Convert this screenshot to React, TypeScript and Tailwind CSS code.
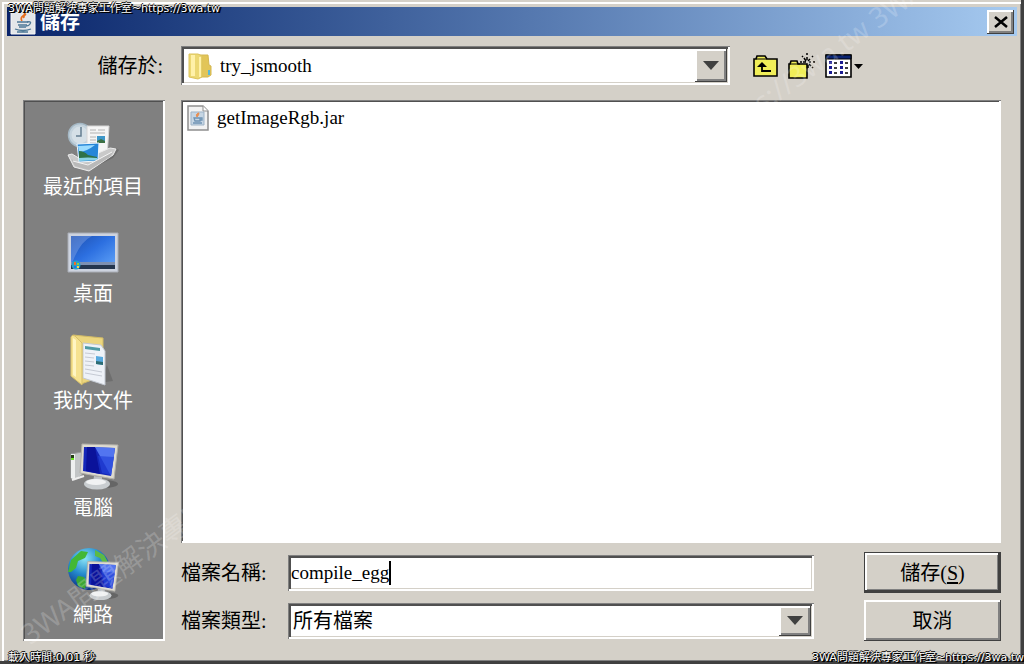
import { useState } from "react";
import type { ReactNode } from "react";

interface Place {
  name: string;
  icon: ReactNode;
}

const sunken =
  "p-[3px] shadow-[inset_1px_1px_0_#808080,inset_-2px_-2px_0_#ffffff,inset_3px_3px_0_#505050,inset_-3px_-3px_0_#d4d0c8]";
const sunkenThin =
  "p-[2px] shadow-[inset_1px_1px_0_#808080,inset_-2px_-2px_0_#ffffff,inset_2px_2px_0_#505050]";
const raised =
  "bg-[#d4d0c8] shadow-[inset_-1px_-1px_0_#404040,inset_2px_2px_0_#ffffff,inset_-3px_-3px_0_#808080]";
const latin = "font-['Liberation_Serif','Noto_Sans_CJK_TC',serif] text-[19px]";
const stamp =
  "pointer-events-none absolute font-['DejaVu_Sans','Noto_Sans_CJK_TC',sans-serif] text-[11px] leading-[13px] text-white whitespace-nowrap [text-shadow:1px_1px_0_#000,-1px_0_0_#000,2px_1px_0_#000,0_-1px_0_#000]";

function RecentIcon() {
  return (
    <svg viewBox="0 0 52 52" className="size-[52px]" aria-hidden="true">
      <path d="M22 50 46 38 52 30 48 28 30 42Z" fill="#555" opacity=".45" />
      <circle cx="13" cy="15" r="11.5" fill="#c3d2dc" stroke="#a4b8c5" strokeWidth="1.5" />
      <circle cx="13" cy="15" r="8.5" fill="#d5e0e7" />
      <path d="M14 7v9H9" fill="none" stroke="#647e91" strokeWidth="1.5" />
      <path d="M20 6h22l-2 32H20Z" fill="#f5f5f5" stroke="#d6d6d6" />
      <path d="M23 10h6m2 0h7M23 13h15M23 17h6m-6 3h6m-6 3h6" stroke="#b3b3b3" />
      <path d="M30 16h8v7h-8Z" fill="#3e96c8" />
      <path d="M30 21l4-2 4 2v2h-8Z" fill="#3c7044" />
      <path d="m1 35 4-1 10 6 28-12 6 1-3 6-24 16-15-4Z" fill="#c9c9c9" stroke="#ececec" />
      <path d="m10 24 22-1-1 18-19 1Z" fill="#2686d8" stroke="#eef6fb" />
      <path d="m11 26 17-1q-9 7-16 7Z" fill="#9bdcff" />
      <path d="M12 31q5 0 9 4l9 2v2l-18 1Z" fill="#2e7148" />
      <path d="M12 38q9-1 18 0v2l-18 1Z" fill="#8ad2e4" />
      <path d="m4 39 8 4 10 1 24-12-3 5-21 13-14-4Z" fill="#b9b9b9" />
      <path d="m6 41 15 4 24-13" fill="none" stroke="#f4f4f4" />
    </svg>
  );
}

function DesktopIcon() {
  return (
    <svg viewBox="0 0 52 52" className="size-[52px]" aria-hidden="true">
      <defs>
        <linearGradient id="desk" x1="0" y1="0" x2="1" y2="1">
          <stop offset="0" stopColor="#1e4fae" />
          <stop offset=".45" stopColor="#2c6fe0" />
          <stop offset="1" stopColor="#63a6fa" />
        </linearGradient>
      </defs>
      <path d="M1 6h50v39H1Z" fill="#cdd3df" stroke="#a9adb5" />
      <path d="M4 9h44v33H4Z" fill="url(#desk)" />
      <path d="M4 9h21Q13 15 6 34l-2 2Z" fill="#9cb8ee" opacity=".35" />
      <path d="M4 35h44v3H4Z" fill="#7d90b2" />
      <path d="M4 38h44v4H4Z" fill="#24364f" />
      <circle cx="9" cy="38" r="4.5" fill="#24a0c8" />
      <path d="M7 35h2v3H7Z" fill="#f06a2a" />
      <path d="M10 36h2v2h-2Z" fill="#8bd13f" />
      <path d="M7 39h2v2H7Z" fill="#2c6fe0" />
      <path d="M10 39h2v2h-2Z" fill="#f8d347" />
    </svg>
  );
}

function DocumentsIcon() {
  return (
    <svg viewBox="0 0 52 52" className="size-[52px]" aria-hidden="true">
      <path d="M32 49l14-2-6-16Z" fill="#444" opacity=".3" />
      <path d="M6 1 36 4v38L14 50Z" fill="#ecd67e" stroke="#d2bb66" />
      <path d="m16 9 18 2 4 6v34l-22-7Z" fill="#eef2f8" stroke="#c3c9d2" />
      <path d="m18 12 15 2v3l-15-2Z" fill="#4f9ba5" />
      <path d="m18 19 10 1m-10 3 9 1m-9 3 9 1m-9 3 9 1m-9 3 17 3m-17 1 17 3" stroke="#c5cad4" />
      <path d="m29 22 7 1v8l-7-1Z" fill="#57a9de" />
      <path d="m29 27 7 1v3l-7-1Z" fill="#2d6c73" />
      <path d="M4 3q1-3 4-1l7 7v42L4 42Z" fill="#f6e290" stroke="#d7bf69" />
      <path d="m6 4 3 2v37l-3-2Z" fill="#fff5c3" />
    </svg>
  );
}

function MonitorShape() {
  return (
    <>
      <ellipse cx="37" cy="43" rx="14" ry="4" fill="#444" opacity=".45" />
      <path d="m27 35 8 1v6h-9Z" fill="#bcc0c4" />
      <ellipse cx="30" cy="43" rx="13" ry="5.5" fill="#c9cdd0" />
      <ellipse cx="29" cy="41" rx="10" ry="3" fill="#f1f2f3" />
      <path d="m15 3 36 1-4 34-34-6Z" fill="#dedbd0" stroke="#b2b0a9" />
      <path d="m17 6 31 1-4 28-28-5Z" fill="#1427b8" />
      <path d="m28 6 20 1-4 28Z" fill="#5275f0" />
      <path d="m20 6 8 0 5 27-14-3Z" fill="#0a129a" />
      <path d="m31 15 16 1-3 18-9-2Z" fill="#2343d8" opacity=".7" />
    </>
  );
}

function ComputerIcon() {
  return (
    <svg viewBox="0 0 52 52" className="size-[52px]" aria-hidden="true">
      <path d="m4 13 11-2v23l-7 5-4-2Z" fill="#c2c5c6" stroke="#979a9b" />
      <path d="M4 13h4v26l-4-2Z" fill="#eef0f0" />
      <path d="M4 14h3v5H4Z" fill="#253f16" />
      <path d="M4 17h3v2H4Z" fill="#6de424" />
      <path d="m5 39 12-4" stroke="#eee" strokeWidth="2" />
      <MonitorShape />
    </svg>
  );
}

function NetworkIcon() {
  return (
    <svg viewBox="0 0 52 52" className="size-[52px]" aria-hidden="true">
      <defs>
        <radialGradient id="globe" cx=".4" cy=".25" r=".75">
          <stop offset="0" stopColor="#8be4f7" />
          <stop offset=".5" stopColor="#258bcd" />
          <stop offset="1" stopColor="#0c2f86" />
        </radialGradient>
      </defs>
      <circle cx="22" cy="21" r="21" fill="url(#globe)" />
      <path d="m4 12 10-9 7 1-3 6-7 3-2 7-5 4-3 0Z" fill="#43b835" />
      <path d="m28 2 9 5 5 9-6-1-3-5-5-2Z" fill="#5cba45" />
      <path d="m11 28 6 1 3 5-2 7-7-3-2-6Z" fill="#3ca634" />
      <g transform="translate(8 11) scale(.85)">
        <MonitorShape />
      </g>
    </svg>
  );
}

function FolderIcon() {
  return (
    <svg viewBox="0 0 24 28" className="h-7 w-6 shrink-0" aria-hidden="true">
      <path d="M9 3h11l1 10 2 1v9l-3 2H9Z" fill="#e2c558" stroke="#d4b751" />
      <path d="M20 18h2v5h-2Z" fill="#59b8d4" />
      <path d="M1 2h9l4 2v21l-4 2-9-2Z" fill="#ecd873" stroke="#dcc35c" />
      <path d="M3 3h4v21H3Zm8 2h2v20h-2Z" fill="#fff1a9" />
    </svg>
  );
}

function JarIcon() {
  return (
    <svg viewBox="0 0 22 26" className="h-[26px] w-[22px] shrink-0" aria-hidden="true">
      <path d="M1 1h15l5 5v19H1Z" fill="#f2f2f2" stroke="#8e8e8e" strokeWidth="1.5" />
      <path d="M16 1v5h5" fill="#fff" stroke="#8e8e8e" />
      <path d="M4 7h13v13H4Z" fill="#c6d6e4" stroke="#9db3c7" />
      <path d="M11 8q-3 2-1 4 2-2 2-4Z" fill="#e98f52" stroke="#e98f52" />
      <path d="M7 13h6v3H8Zm6 0h2v2h-2M6 18h9" fill="none" stroke="#6f93b3" strokeWidth="1.3" />
    </svg>
  );
}

function JavaIcon() {
  return (
    <svg viewBox="0 0 26 26" className="size-[26px]" aria-hidden="true">
      <path d="M1 1h24v24H1Z" fill="#e3e6e9" stroke="#f7f7f7" />
      <path d="M14 2q2 3-1 5t-1 5m4-7q-3 2-2 4" fill="none" stroke="#e76f1e" strokeWidth="1.7" />
      <path d="M7 13h11M8 16h9M9 18h7" stroke="#4e7896" strokeWidth="1.5" />
      <path d="M17 13q5-1 3 2-1 2-4 2M5 20q8 3 16 0M7 23h11" fill="none" stroke="#4e7896" strokeWidth="1.3" />
    </svg>
  );
}

function UpIcon() {
  return (
    <svg viewBox="0 0 25 22" className="h-[22px] w-[25px]" aria-hidden="true">
      <path d="M1 21V4h2l1-3h8l2 3h10v17Z" fill="#f0ee58" stroke="#000" strokeWidth="1.6" />
      <path d="M3 4h11" stroke="#000" />
      <path d="M9 9v7h9" fill="none" stroke="#000" strokeWidth="1.8" />
      <path d="m9 7 5 5H4Z" />
    </svg>
  );
}

function NewFolderIcon() {
  return (
    <svg viewBox="0 0 27 26" className="h-[26px] w-[27px]" aria-hidden="true">
      <path d="M1 25V11h1l1-3h6l1 3h9v14Z" fill="#f0ee58" stroke="#000" strokeWidth="1.6" />
      <path d="M2 11h10" stroke="#000" />
      <path d="M19 0v2m0 2v3M14 3l1 1m1 1 2 3M25 3l-1 1m-2 2-2 2M12 9h2m1 0h3m3 0h2m2 0h2m-6 2 2 2m1 1 1 1m-5-3v3" stroke="#000" strokeWidth="1.5" />
    </svg>
  );
}

function ViewIcon() {
  return (
    <svg viewBox="0 0 38 24" className="h-6 w-[38px]" aria-hidden="true">
      <path d="M1 1h25v22H1Z" fill="#fff" stroke="#000" strokeWidth="1.6" />
      <path d="M1 1h25v4H1Z" fill="#0a2472" stroke="#000" />
      <path d="M4 7h3v3H4Zm0 5h3v3H4Zm0 5h3v3H4ZM15 7h3v3h-3Zm0 5h3v3h-3Zm0 5h3v3h-3Z" fill="#1b1b91" />
      <path d="M9 9h3m-3 5h3m-3 5h3M20 9h3m-3 5h3m-3 5h3" stroke="#000" strokeWidth="1.5" />
      <path d="M29 10h9l-4.500 5Z" />
    </svg>
  );
}

const places: Place[] = [
  { name: "最近的項目", icon: <RecentIcon /> },
  { name: "桌面", icon: <DesktopIcon /> },
  { name: "我的文件", icon: <DocumentsIcon /> },
  { name: "電腦", icon: <ComputerIcon /> },
  { name: "網路", icon: <NetworkIcon /> },
];

function DropArrow() {
  return (
    <span className={`pointer-events-none flex w-8 shrink-0 items-center justify-center self-stretch ${raised}`}>
      <svg viewBox="0 0 16 9" className="h-[9px] w-4" aria-hidden="true">
        <path d="M0 0h16L8 9Z" fill="#404040" />
      </svg>
    </span>
  );
}

export default function App() {
  const [fileName, setFileName] = useState("compile_egg");

  return (
    <div className="relative flex min-h-screen flex-col overflow-hidden bg-[#d4d0c8] p-[7px] font-['Liberation_Serif','Noto_Sans_CJK_TC',serif] text-[20px] leading-7 text-black shadow-[inset_-3px_-3px_0_#404040,inset_2px_2px_0_#d4d0c8,inset_4px_4px_0_#ffffff,inset_-4px_-4px_0_#808080]">
      <header className="flex h-[29px] items-center bg-linear-to-r from-[#0a246a] to-[#a6caf0] px-[3px]">
        <JavaIcon />
        <h1 className="ml-1 flex-1 font-bold text-white">儲存</h1>
        <button type="button" aria-label="關閉" className={`flex h-6 w-[27px] items-center justify-center ${raised}`}>
          <svg viewBox="0 0 14 12" className="h-3 w-3.5" aria-hidden="true">
            <path d="m1 1 12 10M13 1 1 11" stroke="#000" strokeWidth="2.5" />
          </svg>
        </button>
      </header>

      <div className="flex items-center gap-4 px-4 pt-[10px]">
        <label htmlFor="folder" className="w-[142px] shrink-0 pr-0.5 text-right">
          儲存於:
        </label>
        <div className={`flex h-[39px] flex-1 items-center bg-white ${sunken}`}>
          <span className="pl-1">
            <FolderIcon />
          </span>
          <select id="folder" className={`ml-2 min-w-0 flex-1 appearance-none outline-none ${latin}`}>
            <option>try_jsmooth</option>
          </select>
          <DropArrow />
        </div>
        <div className="flex w-[255px] shrink-0 items-center gap-[10px] pl-[7px]">
          <button type="button" aria-label="上一層">
            <UpIcon />
          </button>
          <button type="button" aria-label="建立新資料夾">
            <NewFolderIcon />
          </button>
          <button type="button" aria-label="檢視">
            <ViewIcon />
          </button>
        </div>
      </div>

      <div className="flex flex-1 gap-4 px-4 pt-[15px] pb-4">
        <nav className={`w-[142px] shrink-0 bg-[#808080] ${sunkenThin}`}>
          {places.map((place) => (
            <button
              key={place.name}
              type="button"
              className="flex h-[107px] w-full flex-col items-center pt-[18px] pr-0.5 leading-[30px] text-white"
            >
              {place.icon}
              {place.name}
            </button>
          ))}
        </nav>

        <main className="flex min-w-0 flex-1 flex-col gap-[9px]">
          <ul className={`flex-1 bg-white ${sunkenThin}`}>
            <li className={`flex h-8 items-center gap-2 pl-1 ${latin}`}>
              <JarIcon />
              getImageRgb.jar
            </li>
          </ul>

          <div className="grid grid-cols-[107px_1fr_137px] items-center gap-y-[7px]">
            <label htmlFor="name">檔案名稱:</label>
            <div className={`mr-[50px] flex h-9 items-center bg-white ${sunken}`}>
              <input
                id="name"
                value={fileName}
                onChange={(e) => setFileName(e.target.value)}
                className={`field-sizing-content caret-transparent outline-none ${latin}`}
              />
              <span className="h-6 w-0.5 bg-black" />
            </div>
            <button
              type="submit"
              className="h-[41px] bg-[#d4d0c8] shadow-[inset_0_0_0_1px_#404040,inset_-3px_-3px_0_#404040,inset_3px_3px_0_#ffffff,inset_-4px_-4px_0_#808080]"
            >
              儲存(<u className="underline-offset-2">S</u>)
            </button>

            <label htmlFor="type">檔案類型:</label>
            <div className={`mr-[50px] flex h-9 items-center bg-white ${sunken}`}>
              <select id="type" className="min-w-0 flex-1 appearance-none pl-0.5 outline-none">
                <option>所有檔案</option>
              </select>
              <DropArrow />
            </div>
            <button type="button" className={`h-[41px] ${raised}`}>
              取消
            </button>
          </div>
        </main>
      </div>

      <span className={`${stamp} top-0.5 left-2`}>3WA問題解決專家工作室~https://3wa.tw</span>
      <span className={`${stamp} bottom-0 left-2`}>載入時間:0.01 秒</span>
      <span className={`${stamp} right-0 bottom-0`}>3WA問題解決專家工作室~https://3wa.tw</span>
      <div
        aria-hidden="true"
        className="pointer-events-none absolute bottom-4 left-8 origin-bottom-left -rotate-36 font-['Noto_Sans','Noto_Sans_CJK_TC',sans-serif] text-[28px] whitespace-nowrap text-white/20"
      >
        3WA問題解決專家工作室~https://3wa.tw 3WA問題解決專家工作室~https://3wa.tw 3WA
      </div>
    </div>
  );
}
